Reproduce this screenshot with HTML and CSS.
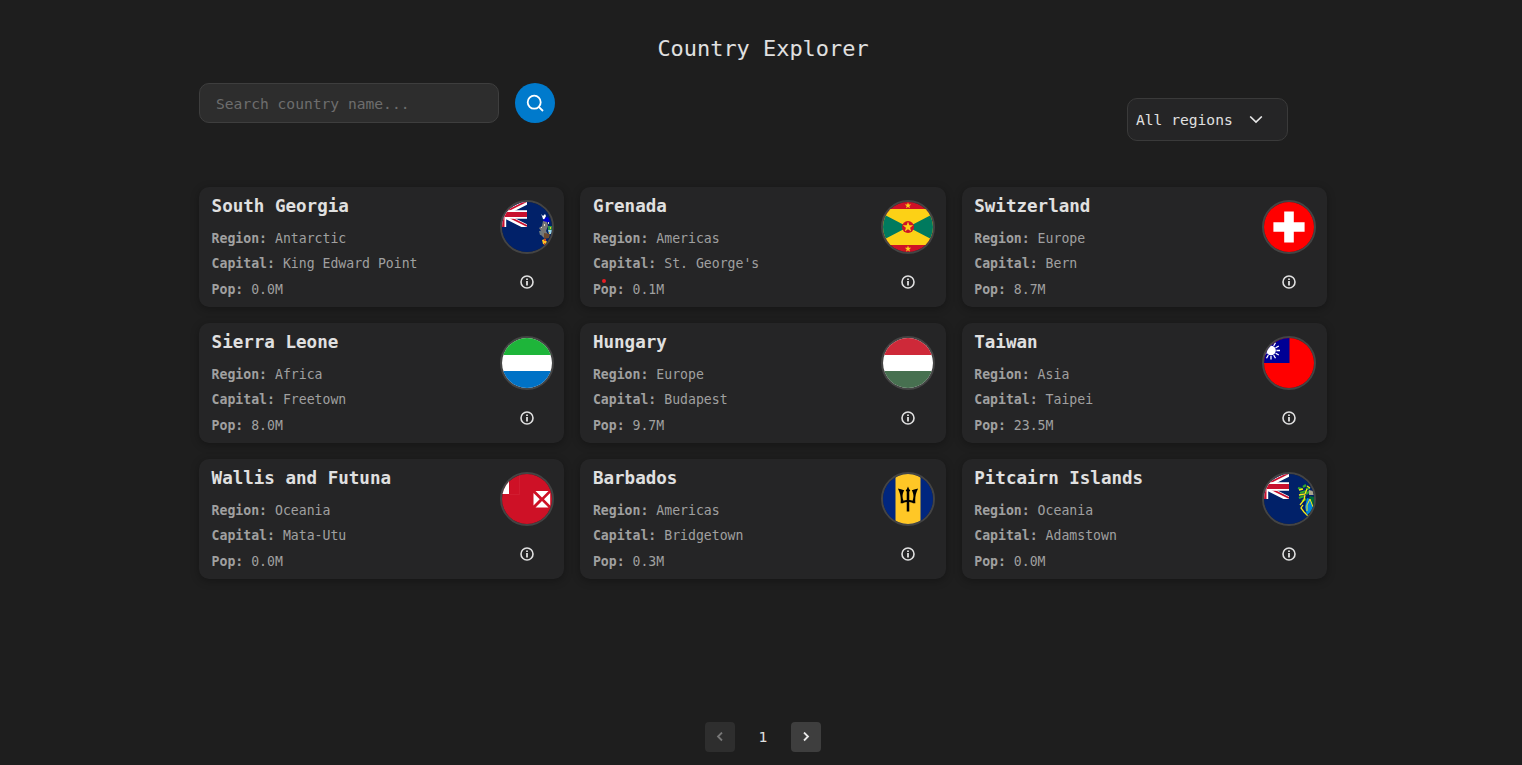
FILE: index.html
```html
<!DOCTYPE html>
<html lang="en">
<head>
<meta charset="utf-8">
<title>Country Explorer</title>
<link rel="stylesheet" href="styles.css">
</head>
<body>
<svg class="defs" aria-hidden="true">
  <symbol id="info" viewBox="0 0 16 16">
    <circle cx="8" cy="8" r="6" fill="none" stroke="#e0e0e0" stroke-width="1.6"/>
    <path d="M7.1 4.4h1.8v1.6H7.1zM7.1 6.9h1.8v4.7H7.1z" fill="#e0e0e0"/>
  </symbol>
  <symbol id="jack" viewBox="0 0 25 25">
    <path fill="#012169" d="M0 0h25v25H0z"/>
    <path d="M0 12.5L25 0M0 12.5L25 25" stroke="#fff" stroke-width="5"/>
    <path d="M0 11.5L25 -1M0 11.5L25 24" stroke="#c8102e" stroke-width="1.7"/>
    <path d="M0 8.3h25v8.4H0zM0 0h4.2v25H0z" fill="#fff"/>
    <path d="M0 10h25v5H0zM0 0h2.5v25H0z" fill="#c8102e"/>
  </symbol>
  <symbol id="star" viewBox="-10 -10 20 20">
    <path d="M0-10L2.4-3.1 9.5-3.1 3.8 1.3 5.9 8.1 0 4 -5.9 8.1 -3.8 1.3 -9.5-3.1 -2.4-3.1z" fill="#fcd116"/>
  </symbol>
</svg>
<main class="app">
  <h1 class="title">Country Explorer</h1>
  <div class="toolbar">
    <form class="search">
      <input class="search-input" type="text" placeholder="Search country name...">
      <button class="search-button" type="button" aria-label="Search">
        <svg width="20" height="20" viewBox="0 0 20 20" fill="none" stroke="#fff" stroke-width="1.8"><circle cx="9.2" cy="9.2" r="6.5"/><path d="M13.8 13.8L18 18"/></svg>
      </button>
    </form>
    <button class="region" type="button"><span>All regions</span>
      <svg width="14" height="8" viewBox="0 0 14 8" fill="none" stroke="#e8e8e8" stroke-width="1.6"><path d="M1.2 .5L7 6.1 12.8 .5"/></svg>
    </button>
  </div>
  <section class="grid">
    <article class="card">
      <div class="details"><h2>South Georgia</h2><p><b>Region:</b> Antarctic</p><p><b>Capital:</b> King Edward Point</p><p><b>Pop:</b> 0.0M</p></div>
      <div class="side">
        <svg class="flag" viewBox="0 0 50 50"><path fill="#012169" d="M0 0h50v50H0z"/><use href="#jack" width="25" height="25"/>
          <path fill="#fff" d="M39 12l2 2 2-2 1 2-1 2 1 2-3-1-1-3z"/><path fill="#0000cd" d="M43 16l3-1 2 5-4 1-3-2z"/>
          <path fill="#777" d="M41 19l4 1 1 4-2 5 3 5-5 2-4-4 1-3-2-3 3-2z"/>
          <path fill="#6d7a80" d="M37 29h3v4h-2z"/><path fill="#ded9c9" d="M42 22h1v2h-1zM39 25h1v1h-1zM46 20h1v2h-1z"/>
          <path fill="#289447" d="M46 24h4v4h-4z"/><path fill="#9cd9e9" d="M46 28h4v4h-3z"/><path fill="#e4c431" d="M48 25h1v2h-1zM47 30h1v1h-1z"/>
          <path fill="#6b4930" d="M42 31l6 1-1 4-5 1z"/><path fill="#ffc221" d="M40 38l3-1 2 3-1 3-3-1z"/><path fill="#d34428" d="M42 37h2v2h-2zM42 41h1v3h-1z"/></svg>
        <svg class="info"><use href="#info"/></svg>
      </div>
    </article>
    <article class="card">
      <div class="details"><h2>Grenada</h2><p><b>Region:</b> Americas</p><p><b>Capital:</b> St. George's</p><p class="marked"><b>Pop:</b> 0.1M</p></div>
      <div class="side">
        <svg class="flag" viewBox="0 0 50 50"><path fill="#ce1126" d="M0 0h50v50H0z"/><path fill="#fcd116" d="M0 7h50v36H0z"/><path fill="#007a5e" d="M-9.7 7L25 25-9.7 43zM59.7 7L25 25 59.7 43z"/><circle cx="25" cy="25" r="6" fill="#ce1126"/>
          <use href="#star" x="19.5" y="19.5" width="11" height="11"/><use href="#star" x="21.6" y="0.2" width="6.8" height="6.8"/><use href="#star" x="21.6" y="43.5" width="6.8" height="6.8"/></svg>
        <svg class="info"><use href="#info"/></svg>
      </div>
    </article>
    <article class="card">
      <div class="details"><h2>Switzerland</h2><p><b>Region:</b> Europe</p><p><b>Capital:</b> Bern</p><p><b>Pop:</b> 8.7M</p></div>
      <div class="side">
        <svg class="flag" viewBox="0 0 50 50"><path fill="#f00" d="M0 0h50v50H0z"/><path fill="#fff" d="M20.2 9.4h9.6v10.8h10.8v9.6H29.8v10.8h-9.6V29.8H9.4v-9.6h10.8z"/></svg>
        <svg class="info"><use href="#info"/></svg>
      </div>
    </article>
    <article class="card">
      <div class="details"><h2>Sierra Leone</h2><p><b>Region:</b> Africa</p><p><b>Capital:</b> Freetown</p><p><b>Pop:</b> 8.0M</p></div>
      <div class="side">
        <svg class="flag" viewBox="0 0 50 50"><path fill="#fff" d="M0 0h50v50H0z"/><path fill="#1eb53a" d="M0 0h50v17H0z"/><path fill="#0072c6" d="M0 33h50v17H0z"/></svg>
        <svg class="info"><use href="#info"/></svg>
      </div>
    </article>
    <article class="card">
      <div class="details"><h2>Hungary</h2><p><b>Region:</b> Europe</p><p><b>Capital:</b> Budapest</p><p><b>Pop:</b> 9.7M</p></div>
      <div class="side">
        <svg class="flag" viewBox="0 0 50 50"><path fill="#fff" d="M0 0h50v50H0z"/><path fill="#ce2939" d="M0 0h50v17H0z"/><path fill="#477050" d="M0 33h50v17H0z"/></svg>
        <svg class="info"><use href="#info"/></svg>
      </div>
    </article>
    <article class="card">
      <div class="details"><h2>Taiwan</h2><p><b>Region:</b> Asia</p><p><b>Capital:</b> Taipei</p><p><b>Pop:</b> 23.5M</p></div>
      <div class="side">
        <svg class="flag" viewBox="0 0 50 50"><path fill="#f00" d="M0 0h50v50H0z"/><path fill="#000095" d="M0 0h25.5v25H0z"/>
          <g transform="translate(7 12.5)" stroke="#fff" stroke-width="1.3"><path d="M0-9V9M-9 0H9M-4.5-7.8L4.5 7.8M4.5-7.8L-4.5 7.8M-7.8-4.5L7.8 4.5M-7.8 4.5L7.8-4.5"/><circle r="5.4" fill="#000095" stroke="none"/><circle r="4.8" fill="#fff" stroke="none"/></g></svg>
        <svg class="info"><use href="#info"/></svg>
      </div>
    </article>
    <article class="card">
      <div class="details"><h2>Wallis and Futuna</h2><p><b>Region:</b> Oceania</p><p><b>Capital:</b> Mata-Utu</p><p><b>Pop:</b> 0.0M</p></div>
      <div class="side">
        <svg class="flag" viewBox="0 0 50 50"><path fill="#ce1126" d="M0 0h50v50H0z"/><path fill="#fff" d="M0 0h7v20H0z"/><path d="M17.5 0v20.5H7" fill="none" stroke="#d5293b" stroke-width=".5"/><path fill="#fff" d="M33.5 17h13L40 23.5zM33.5 33.5h13L40 27zM31.5 19v12.5l6.2-6.2zM48.2 19v12.5L42 25.3z"/></svg>
        <svg class="info"><use href="#info"/></svg>
      </div>
    </article>
    <article class="card">
      <div class="details"><h2>Barbados</h2><p><b>Region:</b> Americas</p><p><b>Capital:</b> Bridgetown</p><p><b>Pop:</b> 0.3M</p></div>
      <div class="side">
        <svg class="flag" viewBox="0 0 50 50"><path fill="#00267f" d="M0 0h50v50H0z"/><path fill="#ffc726" d="M12.5 0h25v50h-25z"/>
          <path transform="translate(-3.75 0) scale(1.15 1)" d="M25 12.5c-.6 2-1.3 3-2 4.2.6.3.9.6.9 1.2v8.2c-1.2.1-2 .3-2.8.7-1.3-3.5-1.1-7.3.6-10.6-2-.8-3.8-1.4-5.5-1.8 2.2 5.1 2.8 9 2.4 14.8h2.1c.4-.7 1.7-1.2 3.2-1.3v9.6h2.2v-9.6c1.5.1 2.8.6 3.2 1.3h2.1c-.4-5.8.2-9.7 2.4-14.8-1.7.4-3.5 1-5.5 1.8 1.7 3.3 1.9 7.1.6 10.6-.8-.4-1.6-.6-2.8-.7v-8.2c0-.6.3-.9.9-1.2-.7-1.2-1.4-2.2-2-4.2z"/></svg>
        <svg class="info"><use href="#info"/></svg>
      </div>
    </article>
    <article class="card">
      <div class="details"><h2>Pitcairn Islands</h2><p><b>Region:</b> Oceania</p><p><b>Capital:</b> Adamstown</p><p><b>Pop:</b> 0.0M</p></div>
      <div class="side">
        <svg class="flag" viewBox="0 0 50 50"><path fill="#012169" d="M0 0h50v50H0z"/><use href="#jack" width="25" height="25"/>
          <path d="M34 14l4 1M36 19l6-2M39 13l3-2M42 15l4-1M35 24l5-2M38 27l4-2M42 20l4-3" stroke="#31a52d" stroke-width="2.2"/>
          <path d="M35 16l4-1M35 21l6-1 2-5M41 21l-1 5-4 5M43 12l3 2M39 31l-2 3 3 4 4 4" fill="none" stroke="#f9e814" stroke-width="1.3"/>
          <path fill="#aaa48d" d="M45 16l4 1 1 4h-5z"/><path fill="#006b36" d="M46 22l4 1v12l-5 4-3-4z"/><path fill="#0087dc" d="M43 24l3 1 4 10-7 6-2-8z"/><path d="M46 25l-3 6v6M46 25l3 8" fill="none" stroke="#f9e814"/></svg>
        <svg class="info"><use href="#info"/></svg>
      </div>
    </article>
  </section>
  <nav class="pager">
    <button class="page-button disabled" type="button" aria-label="Previous"><svg width="8" height="10" viewBox="0 0 8 10"><path d="M6 .5L2 4.5l4 4"/></svg></button>
    <span>1</span>
    <button class="page-button" type="button" aria-label="Next"><svg width="8" height="10" viewBox="0 0 8 10"><path d="M2 .5l4 4-4 4"/></svg></button>
  </nav>
</main>
</body>
</html>
```
FILE: styles.css
```css
* { box-sizing: border-box; }
body {
  margin: 0;
  height: 765px;
  overflow: hidden;
  background: #1e1e1e;
  color: #e0e0e0;
  font-family: Consolas, "DejaVu Sans Mono", monospace;
}
button, input { font: inherit; color: inherit; padding: 0; }
.defs { display: none; }
.app {
  display: flex;
  flex-direction: column;
  width: 1128px;
  height: 765px;
  margin-left: 199px;
  padding: 33px 0 13px;
}
.title {
  margin: 0;
  font-size: 21.93px;
  font-weight: 400;
  line-height: 32px;
  text-align: center;
}
.toolbar {
  display: flex;
  justify-content: space-between;
  height: 104px;
  margin-top: 18px;
  padding-right: 39px;
}
.search { display: flex; gap: 16px; height: 40px; }
.search-input {
  width: 300px;
  height: 40px;
  padding: 1px 16px 0;
  background: #2d2d2d;
  border: 1px solid #3e3e3e;
  border-radius: 10px;
  font-size: 14.62px;
}
.search-input::placeholder { color: #6d6d6d; opacity: 1; }
.search-button {
  display: grid;
  place-items: center;
  width: 40px;
  height: 40px;
  background: #007acc;
  border: 0;
  border-radius: 50%;
}
.region {
  display: flex;
  align-items: center;
  gap: 16px;
  width: 161px;
  height: 43px;
  margin-top: 15px;
  padding-left: 8px;
  background: #252526;
  border: 1px solid #3a3a3a;
  border-radius: 10px;
  font-size: 14.62px;
}
.grid {
  display: grid;
  grid-template-columns: repeat(3, 1fr);
  grid-auto-rows: 120px;
  gap: 16px;
}
.card {
  display: flex;
  justify-content: space-between;
  padding: 6px 10.7px 0 12.6px;
  background: #252526;
  border-radius: 10px;
  box-shadow: 0 2px 8px rgba(0, 0, 0, .3);
}
.details h2 {
  margin: 0 0 6.7px;
  font-size: 17.54px;
  line-height: 26px;
}
.details p {
  margin: 0;
  color: #a0a0a0;
  font-size: 13.16px;
  line-height: 25.6px;
}
.marked { position: relative; }
.marked::after {
  content: "";
  position: absolute;
  left: 9px;
  top: 2px;
  width: 4px;
  height: 4px;
  background: #e51c23;
  border-radius: 50%;
}
.side {
  display: flex;
  flex-direction: column;
  align-items: center;
  gap: 20.4px;
  padding-top: 7px;
}
.flag {
  width: 54px;
  height: 54px;
  border: 2px solid #444;
  border-radius: 50%;
}
.info { width: 16px; height: 16px; }
.pager {
  display: flex;
  justify-content: center;
  align-items: center;
  margin-top: auto;
  font-size: 14.62px;
}
.pager span { width: 56px; padding-bottom: 2px; text-align: center; }
.page-button {
  display: grid;
  place-items: center;
  width: 30px;
  height: 30px;
  background: #3e3e3e;
  border: 0;
  border-radius: 4px;
}
.page-button path { fill: none; stroke: #e8e8e8; stroke-width: 1.8; }
.disabled { background: #2e2e2e; }
.disabled path { stroke: #777; }
```
